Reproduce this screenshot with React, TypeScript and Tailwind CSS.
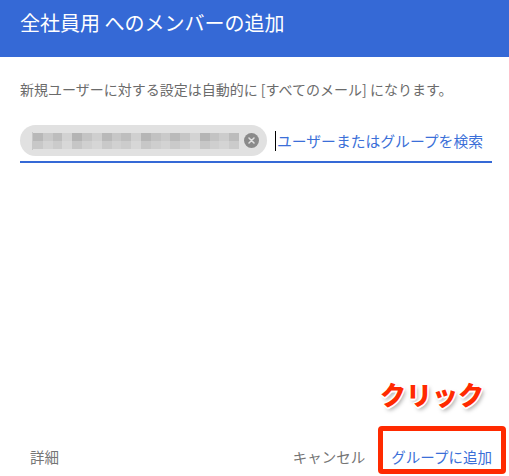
const blur = ["#b8b8b8", "#c9c9c9", "#bdbdbd", "#d2d2d2", "#b4b4b4", "#c4c4c4", "#cfcfcf", "#b9b9b9", "#c7c7c7", "#bebebe", "#d0d0d0", "#b6b6b6", "#c2c2c2", "#cacaca", "#bababa", "#c6c6c6", "#d3d3d3", "#b5b5b5", "#c3c3c3", "#cccccc", "#bcbcbc"];

export default function App() {
  return (
    <div
      className="relative flex h-[476px] w-[509px] flex-col overflow-hidden bg-white"
      style={{ fontFamily: '"Noto Sans CJK JP", "Noto Sans", sans-serif' }}
    >
      <header className="flex h-[57px] shrink-0 items-start bg-[#3569d6] px-[20px] pt-[9px]">
        <h1 className="text-[20px] font-normal leading-[28px] text-white">全社員用 へのメンバーの追加</h1>
      </header>

      <div className="pl-[20px] pr-[17px] pt-[22px]">
        <p className="text-[14px] leading-[20px] text-[#6b6b6b]">
          新規ユーザーに対する設定は自動的に [すべてのメール] になります。
        </p>

        <div className="mt-[26px] flex items-center border-b-2 border-[#3569d6] pb-[5px]">
          <div className="flex h-[31px] w-[247px] items-center rounded-full bg-[#e1e1e1] pl-[12px] pr-[8px]">
            <div className="h-[18px] w-px bg-[#c8c8c8]" />
            <div className="flex flex-1 flex-col blur-[0.6px]">
              <div className="flex h-[8px]">
                {blur.map((c, i) => (
                  <span key={i} className="h-full flex-1" style={{ backgroundColor: c }} />
                ))}
              </div>
              <div className="flex h-[8px]">
                {blur.map((c, i) => (
                  <span key={i} className="h-full flex-1 opacity-60" style={{ backgroundColor: c }} />
                ))}
              </div>
            </div>
            <span className="ml-[5px] flex h-[15px] w-[15px] items-center justify-center rounded-full bg-[#8a8a8a]">
              <svg width="7" height="7" viewBox="0 0 7 7">
                <path d="M1 1 L6 6 M6 1 L1 6" stroke="#e1e1e1" strokeWidth="1.5" strokeLinecap="round" />
              </svg>
            </span>
          </div>
          <span className="ml-[8px] h-[20px] w-px bg-black" />
          <span className="ml-px text-[14.8px] leading-[20px] text-[#3b6fd8]">ユーザーまたはグループを検索</span>
        </div>
      </div>

      <div className="flex-1" />

      <footer className="relative flex h-[64px] items-center pl-[30px] pr-[17px] pt-[26px] text-[14.5px] text-[#757575]">
        <span>詳細</span>
        <span className="ml-auto">キャンセル</span>
        <span className="ml-[26px] text-[#3b6fd8]">グループに追加</span>
        <div className="absolute left-[378px] top-[14px] h-[48px] w-[128px] rounded-[4px] border-[5px] border-[#ff2a00]" />
        <span
          className="absolute left-[380px] top-[-35px] text-[26px] font-black leading-[34px] text-[#ff2a00]"
          style={{
            textShadow:
              "1.5px 0 0 #fff, -1.5px 0 0 #fff, 0 1.5px 0 #fff, 0 -1.5px 0 #fff, 1px 1px 0 #fff, -1px -1px 0 #fff, 1px -1px 0 #fff, -1px 1px 0 #fff, 2px 3px 4px rgba(0,0,0,0.35)",
          }}
        >
          クリック
        </span>
      </footer>
    </div>
  );
}
